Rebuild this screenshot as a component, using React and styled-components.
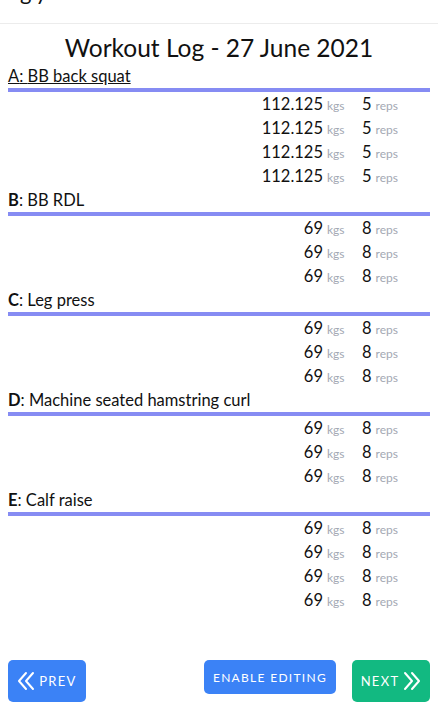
import styled, { createGlobalStyle } from "styled-components"

const Global = createGlobalStyle`
  body {
    margin: 0;
    font-family: Lato, "Noto Sans", sans-serif;
    color: #111;
    background: #fff;
  }
`

const Header = styled.header`
  height: 23px;
  overflow: hidden;
  border-bottom: 1px solid #ececec;
  padding-left: 20px;
`

const Brand = styled.div`
  font-size: 22px;
  line-height: 22px;
  margin-top: -19px;
  letter-spacing: 4px;
`

const Page = styled.main`
  padding: 0 8px;
`

const Title = styled.h1`
  margin: 0;
  padding-top: 8px;
  font-size: 24.5px;
  line-height: 32px;
  font-weight: 400;
  text-align: center;
`

const Heading = styled.div`
  font-size: 16.5px;
  line-height: 24px;
  text-decoration: ${(p) => (p.$active ? "underline" : "none")};
  b {
    font-weight: ${(p) => (p.$active ? 400 : 700)};
  }
`

const Bar = styled.div`
  height: 4px;
  background: #868cf3;
`

const Row = styled.div`
  display: grid;
  grid-template-columns: 1fr auto 39px 68px;
  align-items: baseline;
  height: 24px;
  line-height: 24px;
`

const Num = styled.span`
  grid-column: ${(p) => p.$col};
  font-size: 16.5px;
  text-align: right;
`

const Unit = styled.span`
  font-size: 12px;
  color: #a3a8b3;
  padding-left: 4px;
`

const Reps = styled.span`
  font-size: 16.5px;
`

const Footer = styled.div`
  display: flex;
  align-items: flex-start;
  gap: 16px;
  padding: 48px 8px 14px;
`

const Btn = styled.button`
  display: flex;
  align-items: center;
  gap: 4px;
  border: 0;
  border-radius: 5px;
  color: #fff;
  background: ${(p) => (p.$green ? "#12b981" : "#3b82f6")};
  font-family: Lato, "Noto Sans", sans-serif;
  font-size: ${(p) => (p.$small ? "12px" : "13px")};
  letter-spacing: 1.3px;
  height: ${(p) => (p.$small ? "34px" : "42px")};
  width: ${(p) => (p.$small ? "132px" : "78px")};
  justify-content: center;
  padding: 0;
  margin-left: ${(p) => (p.$push ? "auto" : "0")};
`

function Chevrons({ flip }) {
  return (
    <svg
      width="18"
      height="20"
      viewBox="0 0 18 20"
      fill="none"
      stroke="currentColor"
      strokeWidth="2"
      strokeLinecap="round"
      strokeLinejoin="round"
      style={flip ? { transform: "scaleX(-1)" } : undefined}
    >
      <path d="M9 2 L2 10 L9 18" />
      <path d="M16 2 L9 10 L16 18" />
    </svg>
  )
}

const exercises = [
  { key: "A", name: "BB back squat", sets: [["112.125", 5], ["112.125", 5], ["112.125", 5], ["112.125", 5]] },
  { key: "B", name: "BB RDL", sets: [["69", 8], ["69", 8], ["69", 8]] },
  { key: "C", name: "Leg press", sets: [["69", 8], ["69", 8], ["69", 8]] },
  { key: "D", name: "Machine seated hamstring curl", sets: [["69", 8], ["69", 8], ["69", 8]] },
  { key: "E", name: "Calf raise", sets: [["69", 8], ["69", 8], ["69", 8], ["69", 8]] },
]

export default function App() {
  return (
    <>
      <Global />
      <Header>
        <Brand>gy</Brand>
      </Header>
      <Page>
        <Title>Workout Log - 27 June 2021</Title>
        {exercises.map((ex, i) => (
          <div key={ex.key}>
            <Heading $active={i === 0}>
              <b>{ex.key}</b>: {ex.name}
            </Heading>
            <Bar />
            {ex.sets.map(([w, r], j) => (
              <Row key={j}>
                <Num $col={2}>{w}</Num>
                <Unit>kgs</Unit>
                <span>
                  <Reps>{r}</Reps>
                  <Unit>reps</Unit>
                </span>
              </Row>
            ))}
          </div>
        ))}
      </Page>
      <Footer>
        <Btn>
          <Chevrons />
          PREV
        </Btn>
        <Btn $small $push>ENABLE EDITING</Btn>
        <Btn $green>
          NEXT
          <Chevrons flip />
        </Btn>
      </Footer>
    </>
  )
}
